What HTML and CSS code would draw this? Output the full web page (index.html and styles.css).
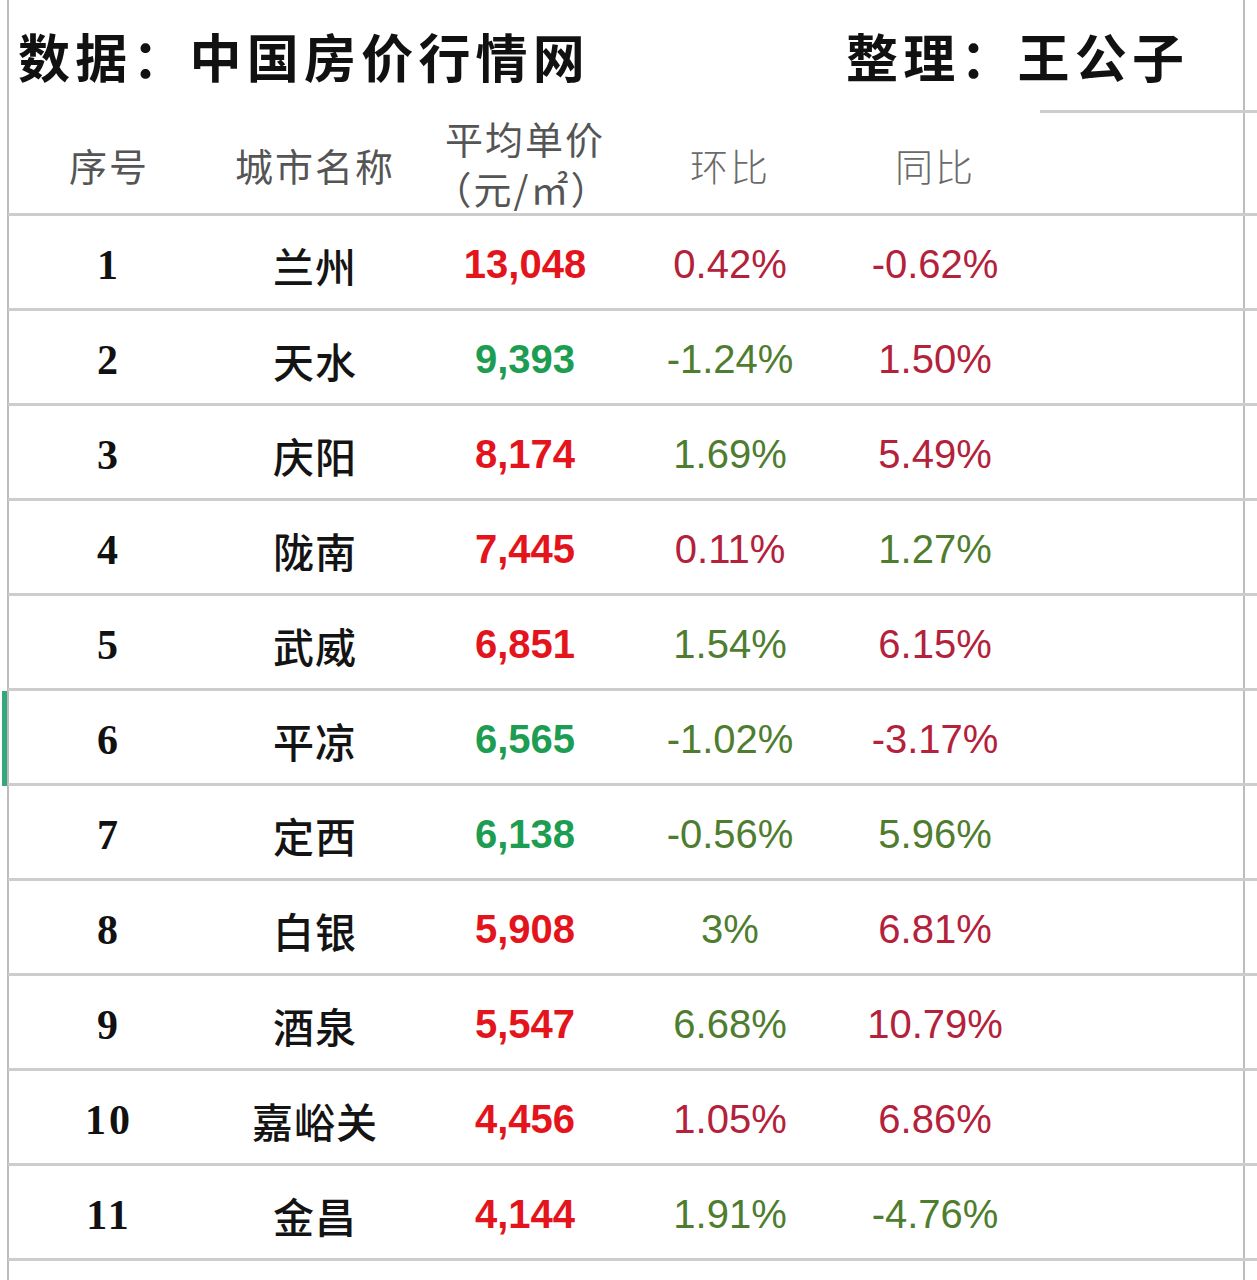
FILE: index.html
```html
<!DOCTYPE html>
<html lang="zh-CN">
<head>
<meta charset="utf-8">
<title>甘肃房价</title>
<link rel="stylesheet" href="styles.css">
</head>
<body>
<div class="sheet">
  <div class="title-row">
    <div class="title">数据：中国房价行情网</div>
    <div class="title">整理：王公子</div>
  </div>
  <div class="row head">
    <div class="cell hd">序号</div>
    <div class="cell hd">城市名称</div>
    <div class="cell hd two"><span>平均单价</span><span>（元/㎡）</span></div>
    <div class="cell hd light">环比</div>
    <div class="cell hd light">同比</div>
    <div class="cell topline"></div>
    <div class="cell topline"></div>
  </div>

  <div class="row"><div class="cell no">1</div><div class="cell city">兰州</div><div class="cell price up">13,048</div><div class="cell pct r">0.42%</div><div class="cell pct r">-0.62%</div><div class="cell"></div><div class="cell"></div></div>
  <div class="row"><div class="cell no">2</div><div class="cell city">天水</div><div class="cell price down">9,393</div><div class="cell pct g">-1.24%</div><div class="cell pct r">1.50%</div><div class="cell"></div><div class="cell"></div></div>
  <div class="row"><div class="cell no">3</div><div class="cell city">庆阳</div><div class="cell price up">8,174</div><div class="cell pct g">1.69%</div><div class="cell pct r">5.49%</div><div class="cell"></div><div class="cell"></div></div>
  <div class="row"><div class="cell no">4</div><div class="cell city">陇南</div><div class="cell price up">7,445</div><div class="cell pct r">0.11%</div><div class="cell pct g">1.27%</div><div class="cell"></div><div class="cell"></div></div>
  <div class="row"><div class="cell no">5</div><div class="cell city">武威</div><div class="cell price up">6,851</div><div class="cell pct g">1.54%</div><div class="cell pct r">6.15%</div><div class="cell"></div><div class="cell"></div></div>
  <div class="row sel"><div class="cell no">6</div><div class="cell city">平凉</div><div class="cell price down">6,565</div><div class="cell pct g">-1.02%</div><div class="cell pct r">-3.17%</div><div class="cell"></div><div class="cell"></div></div>
  <div class="row"><div class="cell no">7</div><div class="cell city">定西</div><div class="cell price down">6,138</div><div class="cell pct g">-0.56%</div><div class="cell pct g">5.96%</div><div class="cell"></div><div class="cell"></div></div>
  <div class="row"><div class="cell no">8</div><div class="cell city">白银</div><div class="cell price up">5,908</div><div class="cell pct g">3%</div><div class="cell pct r">6.81%</div><div class="cell"></div><div class="cell"></div></div>
  <div class="row"><div class="cell no">9</div><div class="cell city">酒泉</div><div class="cell price up">5,547</div><div class="cell pct g">6.68%</div><div class="cell pct r">10.79%</div><div class="cell"></div><div class="cell"></div></div>
  <div class="row"><div class="cell no">10</div><div class="cell city">嘉峪关</div><div class="cell price up">4,456</div><div class="cell pct r">1.05%</div><div class="cell pct r">6.86%</div><div class="cell"></div><div class="cell"></div></div>
  <div class="row"><div class="cell no">11</div><div class="cell city">金昌</div><div class="cell price up">4,144</div><div class="cell pct g">1.91%</div><div class="cell pct g">-4.76%</div><div class="cell"></div><div class="cell"></div></div>
</div>
</body>
</html>
```

FILE: styles.css
```css
* { box-sizing: border-box; }
html, body { margin: 0; padding: 0; background: #fff; }
.sheet {
  position: relative;
  width: 1257px;
  height: 1280px;
  overflow: hidden;
  background:
    linear-gradient(#bcbcbc, #bcbcbc) 7px 0 / 2px 100% no-repeat,
    linear-gradient(#bcbcbc, #bcbcbc) 1243px 0 / 2px 100% no-repeat,
    #fff;
  font-family: "Noto Sans CJK SC", "Liberation Sans", sans-serif;
}
.title-row {
  height: 110px;
  display: grid;
  grid-template-columns: 828px auto;
  align-items: center;
  padding-left: 18px;
  padding-top: 2px;
}
.title {
  font-size: 52px;
  font-weight: 700;
  color: #111;
  letter-spacing: 5.2px;
  line-height: 1;
  white-space: nowrap;
}
.row {
  position: relative;
  margin-left: 8px;
  height: 95px;
  display: grid;
  grid-template-columns: 202px 210px 210px 200px 210px 203px 14px;
  border-bottom: 3px solid #cdcdcd;
}
.row.head { height: 106px; }
.cell {
  display: flex;
  align-items: center;
  justify-content: center;
  padding-top: 6px;
  white-space: nowrap;
}
.topline { border-top: 3px solid #cdcdcd; }
.hd {
  font-size: 38px;
  color: #555;
  letter-spacing: 2px;
}
.hd.light { color: #6a6a6a; font-weight: 300; }
.hd.two {
  flex-direction: column;
  line-height: 50px;
  padding-top: 2px;
}
.hd.two span:last-child { margin-right: 6px; }
.no {
  font-family: "Liberation Serif", "DejaVu Serif", serif;
  font-weight: 700;
  font-size: 42px;
  color: #111;
  letter-spacing: 3px;
}
.city {
  font-size: 41px;
  font-weight: 500;
  color: #141414;
  letter-spacing: 1px;
  padding-top: 6px;
}
.price {
  font-family: "Liberation Sans", Arial, sans-serif;
  font-weight: 700;
  font-size: 40px;
  padding-bottom: 2px;
}
.price.up { color: #e3141c; }
.price.down { color: #1c9d52; }
.pct {
  font-family: "Liberation Sans", Arial, sans-serif;
  font-size: 40px;
  padding-bottom: 2px;
}
.pct.r { color: #b3213b; }
.pct.g { color: #4f7d2f; }
.row.sel::before {
  content: "";
  position: absolute;
  left: -6px;
  top: 0;
  bottom: -3px;
  width: 5px;
  background: #35a77b;
}
```
